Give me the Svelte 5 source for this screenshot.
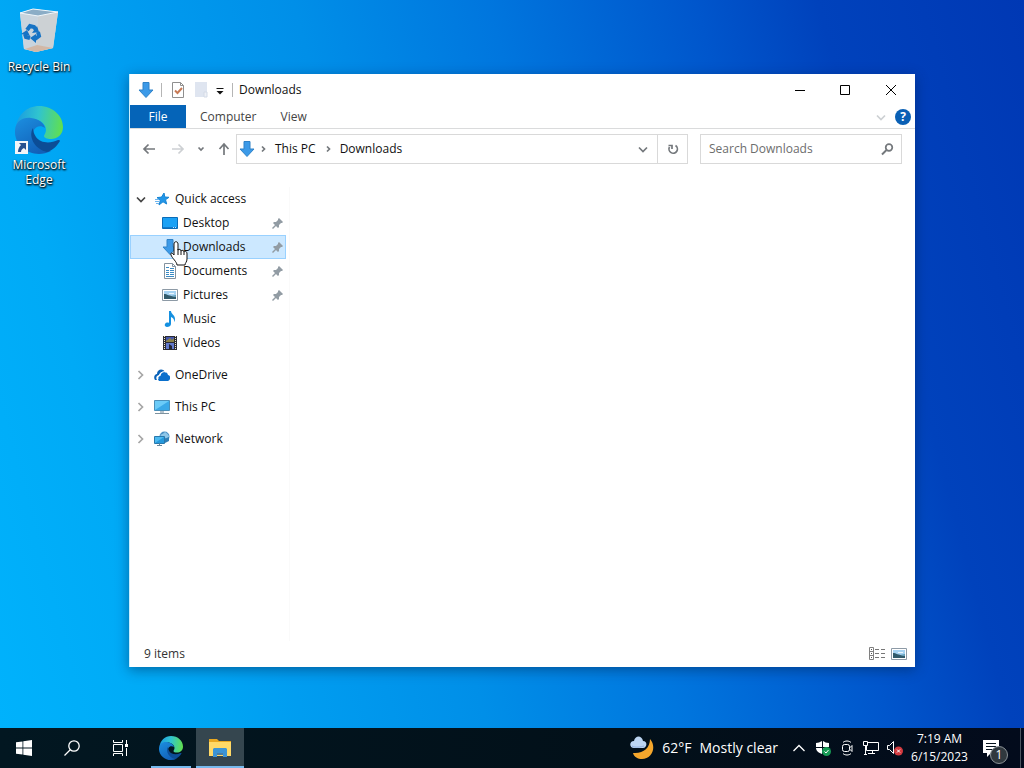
<script>
  const quickAccess = [
    { name: "Desktop", icon: "desktop", pinned: true },
    { name: "Downloads", icon: "download", pinned: true },
    { name: "Documents", icon: "document", pinned: true },
    { name: "Pictures", icon: "picture", pinned: true },
    { name: "Music", icon: "music", pinned: false },
    { name: "Videos", icon: "video", pinned: false },
  ];

  const roots = [
    { name: "OneDrive", icon: "onedrive" },
    { name: "This PC", icon: "pc" },
    { name: "Network", icon: "network" },
  ];

  let selected = $state("Downloads");
  let expanded = $state(true);
  let query = $state("");
</script>

{#snippet icon(name)}
  <svg width="16" height="16" viewBox="0 0 16 16" fill="none" aria-hidden="true">
    {#if name === "download"}
      <path d="M5 .5h6V8h4l-7 7.500L1 8h4z" fill="#3c9ae8" stroke="#2f82c8" />
    {:else if name === "properties"}
      <path d="M2.500 .5h8l3 3v12h-11z" fill="#fff" stroke="#8f8f8f" />
      <path d="M10.500 .5v3h3" stroke="#8f8f8f" />
      <path d="M5 8.500L7.500 11 12 6" stroke="#c77a55" stroke-width="2" />
    {:else if name === "folder-blank"}
      <path d="M2 0h12v11l-2 4H2z" fill="#dfe5f0" />
      <path d="M11 10h3v5h-3z" fill="#eef1f7" stroke="#d3dae6" />
    {:else if name === "star"}
      <path d="M10 2l.8 4 4.200.3-3.500 2.400 1.200 4.300-3.700-2.200L5 14l1.300-4.600L3 6.600l4.500-.5z" fill="#2196e8" stroke="#1684d4" />
      <path d="M1 8.500h4M1 10.500h4M2 12.500h3" stroke="#6fb6ee" />
    {:else if name === "desktop"}
      <path d="M.5 2.500h15v11H.5z" fill="#1ba1f5" stroke="#0a6cb8" />
      <path d="M1 12h14v1H1z" fill="#1278c8" />
      <path d="M11 12.500h1M13 12.500h1" stroke="#bfe3ff" />
    {:else if name === "document"}
      <path d="M2.500 .5h8l3 3v12h-11z" fill="#fff" stroke="#83929f" />
      <path d="M10.500 .5v3h3" stroke="#83929f" />
      <path d="M4 4.500h3M4 7.500h3M8 5.500h4M8 7.500h4M4 9.500h3M8 9.500h4M4 11.500h3M8 11.500h4M4 13.500h8" stroke="#3a8bc4" />
    {:else if name === "picture"}
      <path d="M.5 2.500h15v11H.5z" fill="#fff" stroke="#8d9aa6" />
      <path d="M2 4h12v8H2z" fill="#a5d2f2" />
      <path d="M2 7c3 0 5 2 12 3v2H2z" fill="#315a6b" />
      <path d="M7 6.500h5" stroke="#e9f5fd" />
      <path d="M9 9l5-1v2z" fill="#5d9bb5" />
    {:else if name === "music"}
      <path d="M7 0h2c0 3 4 4 4 8 0 2-1 3-1 3 .5-3-1-4-3-5v7c0 2-2 3-4 3-3 0-3-4 0-4.500 1 0 1.500 0 2 .3z" fill="#1590e0" />
    {:else if name === "video"}
      <path d="M1 1h14v14H1z" fill="#2a2b34" />
      <path d="M2.500 1v14M13.500 1v14" stroke="#f4edc6" stroke-dasharray="1 1" />
      <path d="M4 2h8v5H4z" fill="#4658ac" />
      <path d="M4 8h8v6H4z" fill="#6279cc" />
      <path d="M4 6l4-3 2 2 2-2v4H4z" fill="#8a8148" />
      <path d="M7 14V9l3 2v3z" fill="#222633" />
    {:else if name === "onedrive"}
      <path d="M1 13C-1 10 1 7 3 7c0-5 6-6 8-2-3-.5-5 0-6 3-2.500.5-3.500 3-2 5z" fill="#0a62b8" />
      <path d="M5 14c-2-2-1-5 1.500-5 0-5 7-5 7.500-1 3 .5 3 5 0 6z" fill="#0a6fcc" />
      <path d="M4 12c-.5-2 .5-3.500 2-4 1-3 3.500-4 6-3" stroke="#fff" />
    {:else if name === "pc"}
      <path d="M.5 1.500h15v10H.5z" fill="#6bcbf8" stroke="#4b8fb8" />
      <path d="M1 11L15 2v9z" fill="#3aa9e8" />
      <path d="M6 13h4" stroke="#b4c2cc" stroke-width="2" />
      <path d="M1 14.500h14" stroke="#7d929f" />
    {:else if name === "network"}
      <circle cx="10.500" cy="5.500" r="5" fill="#4a90c4" />
      <path d="M6 4c3-1 4-2 5-3 2 1 4 3 4 5-3 2-5 1-9-2" fill="#8ec6e8" />
      <path d="M11 12l4-2V6l-4 2z" fill="#2f7fb6" />
      <path d="M.5 5.500h10v7H.5z" fill="#4dbaf0" stroke="#2878ac" />
      <path d="M1 12l9-6v6z" fill="#2699dc" />
      <path d="M3 14.500h5M5.500 12.500v2" stroke="#67869a" />
    {:else if name === "details"}
      <path d="M.5 1.500h4v12h-4zM.5 5.500h4M.5 9.500h4" stroke="#808080" />
      <path d="M2 3.500h1M2 7.500h1M2 11.500h1" stroke="#555" />
      <path d="M6 3.500h4M12 3.500h4M6 7.500h4M12 7.500h4M6 11.500h4M12 11.500h4" stroke="#777" />
    {:else if name === "pin"}
      <path d="M10 3l4 4-1 1h-1l-2 2v2l-1 1-5-5 1-1h2l2-2V4z" fill="#929ca4" />
      <path d="M7 10l-3.500 3.500" stroke="#929ca4" stroke-width="1.500" />
    {:else if name === "back"}
      <path d="M14 8H3M7.500 3.500L3 8l4.500 4.500" stroke="currentColor" stroke-width="1.700" />
    {:else if name === "forward"}
      <path d="M2 8h11M8.500 3.500L13 8l-4.500 4.500" stroke="currentColor" stroke-width="1.700" />
    {:else if name === "up"}
      <path d="M8 14V3M3.500 8L8 3l4.500 5" stroke="currentColor" stroke-width="1.700" />
    {:else if name === "down"}
      <path d="M4 6.500l4 4 4-4" stroke="currentColor" stroke-width="1.700" />
    {:else if name === "down-small"}
      <path d="M5.500 6.500L8 9l2.500-2.500" stroke="currentColor" stroke-width="1.700" />
    {:else if name === "right"}
      <path d="M5.500 4l4 4-4 4" stroke="currentColor" stroke-width="1.700" />
    {:else if name === "right-small"}
      <path d="M7 5.500L9.500 8 7 10.500" stroke="currentColor" stroke-width="1.700" />
    {:else if name === "menu"}
      <path d="M4.500 6.500h7" stroke="#111" />
      <path d="M4.500 9h7L8 12.500z" fill="#111" />
    {:else if name === "refresh"}
      <path d="M4.500 6a4.200 4.200 0 1 0 6-1.500" stroke="currentColor" stroke-width="1.700" />
      <path d="M3.500 4.500H7V8" stroke="currentColor" stroke-width="1.700" />
    {:else if name === "search"}
      <circle cx="10" cy="6.500" r="3.300" stroke="currentColor" stroke-width="1.700" />
      <path d="M7.500 9L3 13.500" stroke="currentColor" stroke-width="2" />
    {:else if name === "minimize"}
      <path d="M3 8.500h10" stroke="#000" />
    {:else if name === "maximize"}
      <path d="M2.500 3.500h9v9h-9z" stroke="#000" />
    {:else if name === "close"}
      <path d="M2 3l10 10M12 3L2 13" stroke="#000" />
    {/if}
  </svg>
{/snippet}

{#snippet edge(size)}
  <svg width={size} height={size} viewBox="0 0 48 48" aria-hidden="true">
    <defs>
      <linearGradient id="edge-top-{size}" x1="0" y1=".5" x2="1" y2=".6">
        <stop offset="0" stop-color="#1b9de0" />
        <stop offset=".45" stop-color="#30c4cf" />
        <stop offset="1" stop-color="#62e04c" />
      </linearGradient>
      <linearGradient id="edge-left-{size}" x1="0" y1="0" x2=".6" y2="1">
        <stop offset="0" stop-color="#1c8fe0" />
        <stop offset="1" stop-color="#1260b8" />
      </linearGradient>
    </defs>
    <path d="M1 22C2 9 12 0 24 0c14 0 24 10 24 21 0 8-6 12-12 12-4 0-7-1-7-3 0-1 2-3 2-6 0-6-6-11-14-11C9 13 3 17 1 22z" fill="url(#edge-top-{size})" />
    <path d="M0 24C1 15 8 11 16 12c8 1 13 5 14 10-4-3-9-2-11 2-4 8 4 20 17 21-4 2-8 3-12 3C10 48-1 37 0 24z" fill="url(#edge-left-{size})" />
    <path d="M18 22c-5 8 1 21 14 24 6-2 10-6 13-11 0-1-1-1-2-1-8 4-18 3-22-3-2-3-3-6-3-9z" fill="#0c4d96" />
  </svg>
{/snippet}

<div class="screen">
  <main class="desktop">
    <nav class="shortcuts" aria-label="Desktop">
      <button type="button" class="shortcut">
        <svg width="48" height="48" viewBox="0 0 48 48" aria-hidden="true">
          <path d="M5 5l13-4 25 3-5 36-17 4-12-3z" fill="#d8dee3" />
          <path d="M5 5l18 3-2 36-12-3z" fill="#c9d4dd" />
          <path d="M23 8l20-4-5 36-17 4z" fill="#ccd1d4" />
          <path d="M5 5l13-4 25 3-20 4z" fill="#8badc6" stroke="#eff6fb" />
          <path d="M10 41l12-4 16 3-17 4z" fill="#d2b8a6" />
          <path d="M12 22l3-4 4 1 2 3M23 24l1 4-4 3M15 30l-4-1-1-3" fill="none" stroke="#1673c4" stroke-width="4" />
          <path d="M17 25l7-1-2-6zM21 26v9l-6-5zM6 26l6-4 3 6z" fill="#1673c4" />
        </svg>
        <span>Recycle Bin</span>
      </button>
      <button type="button" class="shortcut">
        <span class="shortcut-icon">
          {@render edge(48)}
          <svg class="link-badge" width="13" height="13" viewBox="0 0 13 13" aria-hidden="true">
            <path d="M0 0h13v13H0z" fill="#f3f5f8" />
            <path d="M4 2h7v7L9 7c-2 1-3 2-3 4H3c0-3 1-5 3-7z" fill="#27508f" />
          </svg>
        </span>
        <span>Microsoft Edge</span>
      </button>
    </nav>

    <section class="window" aria-label="Downloads">
      <header class="title-bar">
        <div class="quick-tools">
          {@render icon("download")}
          <span class="divider"></span>
          <button type="button" aria-label="Properties">{@render icon("properties")}</button>
          <button type="button" aria-label="New folder">{@render icon("folder-blank")}</button>
          <button type="button" class="narrow" aria-label="Customize">{@render icon("menu")}</button>
          <span class="divider"></span>
        </div>
        <h1>Downloads</h1>
        <div class="window-buttons">
          <button type="button" aria-label="Minimize">{@render icon("minimize")}</button>
          <button type="button" aria-label="Maximize">{@render icon("maximize")}</button>
          <button type="button" aria-label="Close">{@render icon("close")}</button>
        </div>
      </header>

      <div class="ribbon">
        <button type="button" class="file">File</button>
        <button type="button">Computer</button>
        <button type="button">View</button>
        <div class="ribbon-end">
          <button type="button" class="faint" aria-label="Expand ribbon">{@render icon("down")}</button>
          <button type="button" class="help" aria-label="Help">?</button>
        </div>
      </div>

      <div class="toolbar">
        <div class="history">
          <button type="button" aria-label="Back">{@render icon("back")}</button>
          <button type="button" class="faint" aria-label="Forward">{@render icon("forward")}</button>
          <button type="button" class="narrow" aria-label="Recent locations">{@render icon("down-small")}</button>
          <button type="button" aria-label="Up">{@render icon("up")}</button>
        </div>
        <div class="address">
          {@render icon("download")}
          {@render icon("right-small")}
          <button type="button" class="crumb">This PC</button>
          {@render icon("right-small")}
          <button type="button" class="crumb">Downloads</button>
          <button type="button" class="previous" aria-label="Previous locations">{@render icon("down")}</button>
          <button type="button" class="refresh" aria-label="Refresh">{@render icon("refresh")}</button>
        </div>
        <label class="search">
          <input type="text" placeholder="Search Downloads" aria-label="Search Downloads" bind:value={query} />
          {@render icon("search")}
        </label>
      </div>

      <div class="content">
        <nav class="tree" aria-label="Folders">
          <div class="group">
            <button type="button" class="row root" class:open={expanded} onclick={() => (expanded = !expanded)}>
              {@render icon(expanded ? "down" : "right")}
              {@render icon("star")}
              <span>Quick access</span>
            </button>
            {#if expanded}
              {#each quickAccess as item}
                <button
                  type="button"
                  class="row child"
                  class:selected={selected === item.name}
                  onclick={() => (selected = item.name)}
                >
                  {@render icon(item.icon)}
                  <span>{item.name}</span>
                  {#if item.pinned}{@render icon("pin")}{/if}
                </button>
              {/each}
            {/if}
          </div>
          {#each roots as item}
            <button type="button" class="row root">
              {@render icon("right")}
              {@render icon(item.icon)}
              <span>{item.name}</span>
            </button>
          {/each}
        </nav>
        <div class="files"></div>
      </div>

      <footer class="status">
        <span>9 items</span>
        <button type="button" aria-label="Details view">{@render icon("details")}</button>
        <button type="button" aria-label="Large icons view">{@render icon("picture")}</button>
      </footer>
    </section>

    <svg class="pointer" width="20" height="26" viewBox="0 0 20 26" aria-hidden="true">
      <path
        d="M5 14V3c0-3 4-3 4 0v6c1-1 3-1 3 1 1-1 3-1 3 1 1-1 3-1 3 2v5c0 3-2 4-2 6H8c0-3-5-7-6-10-1-2 1-3 3 0z"
        fill="#fff"
        stroke="#111"
      />
      <path d="M9 8v6M12 10v4M15 11v3" stroke="#111" />
    </svg>
  </main>

  <footer class="taskbar">
    <button type="button" class="task" aria-label="Start">
      <svg width="16" height="16" viewBox="0 0 16 16" aria-hidden="true">
        <path d="M0 2.300L6.500 1.400v6.200H0zM7.300 1.300L16 0v7.600H7.300zM0 8.400h6.500v6.200L0 13.700zM7.300 8.400H16V16l-8.700-1.300z" fill="#fff" />
      </svg>
    </button>
    <button type="button" class="task" aria-label="Search">
      <svg width="16" height="16" viewBox="0 0 16 16" fill="none" stroke="#fff" aria-hidden="true">
        <circle cx="10" cy="6" r="5.200" stroke-width="1.300" />
        <path d="M6.500 9.500l-6 6" stroke-width="1.300" />
      </svg>
    </button>
    <button type="button" class="task" aria-label="Task view">
      <svg width="17" height="16" viewBox="0 0 17 16" fill="none" stroke="#fff" aria-hidden="true">
        <path d="M1.500 4.500h9v7h-9zM1.500 0v2.500h9V0M1.500 16v-2.500h9V16M14.500 0v4M14.500 8v8" />
        <path d="M13 4h3v3h-3z" fill="#fff" stroke="none" />
      </svg>
    </button>
    <button type="button" class="task running" aria-label="Microsoft Edge">{@render edge(24)}</button>
    <button type="button" class="task active" aria-label="File Explorer">
      <svg width="22" height="20" viewBox="0 0 22 20" aria-hidden="true">
        <path d="M0 1h8l2 2h12v15H0z" fill="#e9a820" />
        <path d="M0 4h22v14H0z" fill="#ffd967" />
        <path d="M4 19v-8l1-1h12l1 1v8h-4v-4H8v4z" fill="#3c94d4" />
        <path d="M8 15h6v2H8z" fill="#4c7da0" />
      </svg>
    </button>

    <div class="tray">
      <button type="button" class="weather">
        <svg width="24" height="24" viewBox="0 0 24 24" aria-hidden="true">
          <path d="M20 3c7 8 2 20-8 20-4 0-8-2-9-6 10 1 17-5 17-14z" fill="#f5a72c" />
          <path d="M4 12c-5 0-5-7 0-7 1-6 8-6 9 0 5 0 4 7 0 7z" fill="#bcd5f2" />
          <path d="M2 10c3 2 9 1 12 0" fill="none" stroke="#8daddb" />
        </svg>
        <span>62°F</span>
        <span>Mostly clear</span>
      </button>
      <button type="button" aria-label="Show hidden icons">
        <svg width="16" height="16" viewBox="0 0 16 16" fill="none" stroke="#fff" aria-hidden="true">
          <path d="M2.500 11L8 5.500l5.500 5.500" stroke-width="1.300" />
        </svg>
      </button>
      <button type="button" aria-label="Windows Security">
        <svg width="16" height="16" viewBox="0 0 16 16" fill="none" aria-hidden="true">
          <path d="M7 1v6H1V3c2 0 4-1 6-2zM8 1c2 1 3 2 6 2v4H8zM1 8h6v6c-3-1-6-3-6-6zM8 8h6c0 3-3 5-6 6z" fill="#fff" />
          <circle cx="11.500" cy="11.500" r="4.500" fill="#179b55" />
          <path d="M9.500 11.500L11 13l2.500-3" stroke="#fff" />
        </svg>
      </button>
      <button type="button" aria-label="Meet now">
        <svg width="16" height="16" viewBox="0 0 16 16" fill="none" stroke="#fff" aria-hidden="true">
          <rect x="3.500" y="4.500" width="7" height="7" rx="2" />
          <path d="M10.500 8L13 5.500v6L10.500 9M4 2.500c2-2 6-2 8 0M4 13.500c2 2 6 2 8 0" />
        </svg>
      </button>
      <button type="button" aria-label="Network">
        <svg width="16" height="16" viewBox="0 0 16 16" fill="none" stroke="#fff" aria-hidden="true">
          <path d="M5 2.500h10.500v8h-12V6M5 13.500h7M9.500 10.500v3M.5 1.500h4v4h-4zM2.500 5.500v9M1 14.500h3" />
        </svg>
      </button>
      <button type="button" aria-label="Volume muted">
        <svg width="16" height="16" viewBox="0 0 16 16" fill="none" aria-hidden="true">
          <path d="M.5 5.500h2l4-4v12l-4-4h-2z" stroke="#fff" />
          <circle cx="11.500" cy="11" r="4.500" fill="#d33a3f" />
          <path d="M10 9.500l3 3M13 9.500l-3 3" stroke="#fff" />
        </svg>
      </button>
      <button type="button" class="clock">
        <time datetime="07:19">7:19 AM</time>
        <time datetime="2023-06-15">6/15/2023</time>
      </button>
      <button type="button" class="notices" aria-label="Notifications, 1 new">
        <svg width="18" height="18" viewBox="0 0 18 18" fill="none" aria-hidden="true">
          <path d="M1 1h16v13H9l-4 4v-4H1z" fill="#fff" />
          <path d="M4 4.500h10M4 7.500h10M4 10.500h7" stroke="#06131e" />
        </svg>
        <span class="count">1</span>
      </button>
      <span class="show-desktop"></span>
    </div>
  </footer>
</div>

<style>
  :global(body) {
    margin: 0;
  }
  .screen {
    display: grid;
    grid-template-rows: 1fr 40px;
    min-height: 100vh;
    font: 12px/16px "Open Sans", "Noto Sans", sans-serif;
    color: #111;
    overflow: hidden;
  }
  button {
    display: flex;
    align-items: center;
    justify-content: center;
    padding: 0;
    border: none;
    background: none;
    color: inherit;
    font: inherit;
  }
  svg {
    display: block;
    flex: none;
  }
  .desktop {
    position: relative;
    background: linear-gradient(
      75deg,
      #00b2fc 0%,
      #00aaf6 14%,
      #009df0 25%,
      #008fe8 40%,
      #0076de 56%,
      #0056cc 73%,
      #0042bc 83%,
      #0038b4 100%
    );
  }
  .shortcuts {
    display: flex;
    flex-direction: column;
    gap: 32px;
    width: 78px;
    padding-top: 8px;
  }
  .shortcut {
    flex-direction: column;
    gap: 3px;
    color: #fff;
    line-height: 15px;
    text-shadow: 0 1px 2px #000, 1px 1px 2px #000;
  }
  .shortcut-icon {
    position: relative;
  }
  .link-badge {
    position: absolute;
    left: 0;
    bottom: 0;
  }

  .window {
    position: absolute;
    inset: 74px 109px 61px 129px;
    display: flex;
    flex-direction: column;
    box-sizing: border-box;
    border-left: 1px solid #c9efff;
    background: #fff;
    box-shadow: 0 3px 12px #00204a77;
  }
  .title-bar {
    display: flex;
    align-items: center;
    height: 31px;
    padding-left: 8px;
  }
  .quick-tools {
    display: flex;
    align-items: center;
    gap: 5px;
  }
  .quick-tools button {
    width: 18px;
  }
  .quick-tools .narrow {
    width: 10px;
  }
  .divider {
    width: 1px;
    height: 14px;
    margin: 0 2px;
    background: #b5b5b5;
  }
  h1 {
    flex: 1;
    margin: 0 0 0 4px;
    font-size: 12px;
    font-weight: 400;
  }
  .window-buttons {
    display: flex;
  }
  .window-buttons button {
    width: 46px;
    height: 30px;
  }
  .ribbon {
    display: flex;
    height: 23px;
    border-bottom: 1px solid #dadbdc;
    color: #444;
  }
  .ribbon > button {
    padding: 0 12px;
  }
  .ribbon > .file {
    width: 56px;
    margin-right: 2px;
    background: #0564b8;
    color: #fff;
  }
  .ribbon-end {
    display: flex;
    align-items: center;
    gap: 6px;
    margin-left: auto;
    padding-right: 4px;
  }
  .faint {
    color: #cdd0d3;
  }
  .help {
    width: 16px;
    height: 16px;
    border-radius: 50%;
    background: #0a60b5;
    color: #fff;
    font-weight: 700;
  }

  .toolbar {
    display: flex;
    align-items: center;
    height: 40px;
    padding-right: 13px;
    color: #74787c;
  }
  .history {
    display: flex;
    gap: 5px;
    width: 106px;
    box-sizing: border-box;
    padding-left: 7px;
  }
  .history button {
    flex: none;
    width: 24px;
  }
  .history .narrow {
    width: 12px;
  }
  .address {
    display: flex;
    flex: 1;
    align-items: center;
    height: 28px;
    padding-left: 2px;
    border: 1px solid #d9d9d9;
  }
  .crumb {
    padding: 0 4px;
    color: #111;
  }
  .previous {
    width: 28px;
    height: 28px;
    margin-left: auto;
  }
  .refresh {
    width: 30px;
    height: 28px;
    border-left: 1px solid #d9d9d9;
  }
  .search {
    display: flex;
    align-items: center;
    width: 200px;
    height: 28px;
    margin-left: 12px;
    border: 1px solid #d9d9d9;
  }
  .search input {
    flex: 1;
    min-width: 0;
    padding: 0 8px;
    border: none;
    outline: none;
    background: none;
    font: inherit;
  }
  .search input::placeholder {
    color: #6d6d6d;
  }
  .search :global(svg) {
    margin-right: 6px;
  }

  .content {
    display: flex;
    flex: 1;
    min-height: 0;
    padding-top: 18px;
  }
  .tree {
    display: flex;
    flex-direction: column;
    gap: 8px;
    width: 156px;
  }
  .row {
    width: 100%;
    height: 24px;
    box-sizing: border-box;
    border: 1px solid transparent;
  }
  .row span {
    flex: 1;
    text-align: left;
  }
  .root {
    gap: 5px;
    padding-left: 2px;
    color: #a6a6a6;
  }
  .root.open {
    color: #444;
  }
  .root span {
    color: #111;
  }
  .child {
    gap: 5px;
    padding-left: 31px;
  }
  .selected {
    border-color: #99d1ff;
    background: #cce8ff;
  }
  .files {
    flex: 1;
    margin-left: 3px;
    border-left: 1px solid #fafafa;
  }
  .status {
    display: flex;
    align-items: center;
    gap: 6px;
    height: 26px;
    padding: 0 8px 0 14px;
    color: #333;
  }
  .status span {
    flex: 1;
  }
  .pointer {
    position: absolute;
    left: 169px;
    top: 241px;
  }

  .taskbar {
    display: flex;
    background: linear-gradient(90deg, #021721, #021019 60%, #030b1c);
    color: #fff;
  }
  .task {
    width: 48px;
    box-sizing: border-box;
    border-bottom: 2px solid transparent;
    border-top: 2px solid transparent;
  }
  .running {
    width: 40px;
    margin: 0 5px 0 7px;
    border-bottom-color: #76b9ed;
  }
  .active {
    border-top-color: #35464f;
    border-bottom-color: #76b9ed;
    background: #35464f;
  }
  .tray {
    display: flex;
    margin-left: auto;
  }
  .tray button {
    width: 24px;
  }
  .tray .weather {
    width: auto;
    gap: 8px;
    margin-right: 9px;
    font-size: 14px;
  }
  .tray .clock {
    flex-direction: column;
    width: 65px;
    line-height: 18px;
  }
  .tray .notices {
    position: relative;
    justify-content: flex-start;
    width: 48px;
    padding-left: 10px;
  }
  .count {
    position: absolute;
    right: 12px;
    bottom: 4px;
    width: 16px;
    height: 16px;
    border: 1px solid #8b9297;
    border-radius: 50%;
    background: #30383e;
  }
  .show-desktop {
    width: 3px;
    border-left: 1px solid #4c5661;
  }
</style>
